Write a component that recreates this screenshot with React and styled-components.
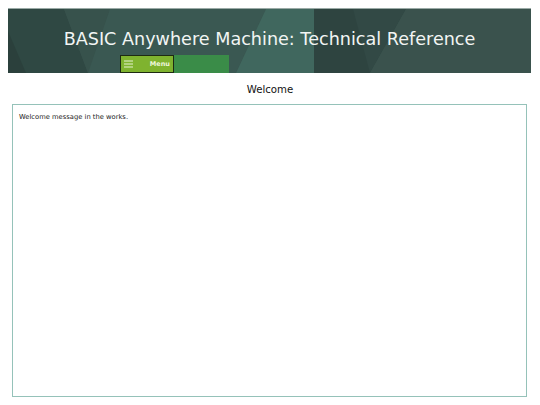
import React from "react";
import styled, { createGlobalStyle } from "styled-components";

const Global = createGlobalStyle`
  html, body { margin: 0; padding: 0; background: #ffffff; }
  body { margin: 8px; font-family: "DejaVu Sans", sans-serif; color: #000; }
`;

const Page = styled.div`
  display: flex;
  flex-direction: column;
  width: 524px;
`;

const Header = styled.header`
  position: relative;
  width: 523px;
  height: 65px;
  box-sizing: border-box;
  background: #38534d;
  border-top: 1px solid #9aaaa6;
  display: flex;
  flex-direction: column;
  align-items: stretch;
`;

const HeaderArt = styled.svg`
  position: absolute;
  inset: 0;
  width: 100%;
  height: 100%;
  z-index: 0;
`;

const Title = styled.h1`
  position: relative;
  z-index: 1;
  margin: 0;
  padding-top: 19px;
  height: 29px;
  font-family: "DejaVu Sans", sans-serif;
  font-weight: normal;
  font-size: 17.6px;
  line-height: 22px;
  color: #f2f5f4;
  text-align: center;
`;

const NavBar = styled.nav`
  position: relative;
  z-index: 1;
  margin-left: 112px;
  width: 109px;
  height: 18px;
  background: #3a8c48;
  display: flex;
  align-items: stretch;
`;

const MenuButton = styled.button`
  width: 54px;
  height: 18px;
  box-sizing: border-box;
  margin: 0;
  padding: 0 3px 0 3px;
  border: 1px solid #1d2a12;
  background: #7fb32f;
  color: #eef6dc;
  display: flex;
  align-items: center;
  justify-content: space-between;
  font-family: "DejaVu Sans", sans-serif;
  font-weight: bold;
  font-size: 6.5px;
  cursor: pointer;
`;

const Heading = styled.h2`
  margin: 10px 0 0 0;
  height: 19px;
  font-family: "DejaVu Sans", sans-serif;
  font-weight: normal;
  font-size: 10.2px;
  line-height: 14px;
  text-align: center;
  color: #111;
`;

const ContentBox = styled.section`
  margin: 2px 5px 0 4px;
  height: 293px;
  box-sizing: border-box;
  border: 1px solid #95c2b9;
  padding: 8px 6px;
  font-family: "DejaVu Sans", sans-serif;
  font-size: 6.75px;
  line-height: 9px;
  color: #222;
`;

function Hamburger() {
  return (
    <svg width="9" height="8" viewBox="0 0 9 8">
      <rect x="0" y="0.5" width="9" height="1" fill="#e6f2cf" />
      <rect x="0" y="3.5" width="9" height="1" fill="#e6f2cf" />
      <rect x="0" y="6.5" width="9" height="1" fill="#e6f2cf" />
    </svg>
  );
}

export default function App() {
  return (
    <>
      <Global />
      <Page>
        <Header>
          <HeaderArt viewBox="0 0 523 64" preserveAspectRatio="none">
            <rect x="0" y="0" width="523" height="64" fill="#38534d" />
            <polygon points="0,0 56,0 80,64 0,64" fill="#2f4843" />
            <polygon points="0,22 18,64 0,64" fill="#2b403c" />
            <polygon points="56,0 102,0 80,64" fill="#37524c" />
            <polygon points="102,0 258,0 228,64 80,64" fill="#3a5852" />
            <polygon points="258,0 306,0 306,64 228,64" fill="#40675e" />
            <polygon points="306,0 398,0 362,64 306,64" fill="#2e4440" />
            <polygon points="345,0 398,0 362,64" fill="#324945" />
            <polygon points="398,0 523,0 523,64 362,64" fill="#3a524d" />
          </HeaderArt>
          <Title>BASIC Anywhere Machine: Technical Reference</Title>
          <NavBar>
            <MenuButton>
              <Hamburger />
              <span>Menu</span>
            </MenuButton>
          </NavBar>
        </Header>
        <Heading>Welcome</Heading>
        <ContentBox>Welcome message in the works.</ContentBox>
      </Page>
    </>
  );
}
